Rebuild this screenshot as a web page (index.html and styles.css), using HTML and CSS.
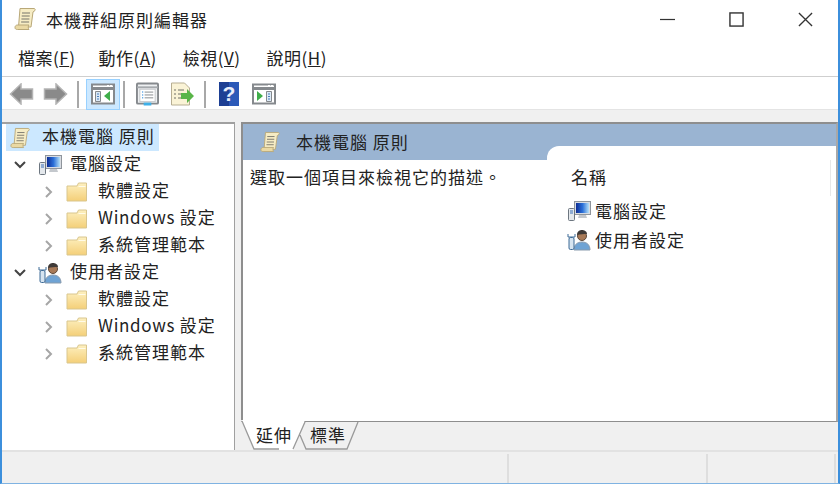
FILE: index.html
```html
<!DOCTYPE html>
<html lang="zh-Hant">

<head>
  <meta charset="UTF-8">
  <title>本機群組原則編輯器</title>
  <link rel="stylesheet" href="styles.css">
</head>

<body>
  <svg class="defs" width="0" height="0">
    <defs>
      <linearGradient id="folder-fill" x1="0" y1="0" x2="0" y2="1">
        <stop offset="0" stop-color="#fdf0c0"/>
        <stop offset="1" stop-color="#f4cf78"/>
      </linearGradient>
      <linearGradient id="screen-fill" x1="0" y1="0" x2="1" y2="0">
        <stop offset="0" stop-color="#0c2c94"/>
        <stop offset="0.5" stop-color="#2a6fd8"/>
        <stop offset="1" stop-color="#b5e0f8"/>
      </linearGradient>
      <symbol id="scroll" viewBox="0 0 22 24">
        <path d="M6 1.500h14c1 0 1.500 1 1 2l-2 1.500-2 15H4.500L6 1.500z" fill="#f6ecc4" stroke="#b9a878"/>
        <path d="M1 20.500c0-1.500 1-2.500 2.500-2.500H15c-1 1-1 3 0 4.500H3.500C2 22.500 1 22 1 20.500z" fill="#ead9a4" stroke="#b9a878"/>
        <path d="M8 6h8M7.700 9h8M7.400 12h8M7.100 15h8" stroke="#77756b" fill="none"/>
      </symbol>
      <symbol id="computer" viewBox="0 0 24 22">
        <rect x="7.500" y="1.500" width="16" height="13" fill="#d8dce2" stroke="#8f959c"/>
        <rect x="9" y="3" width="13" height="10" fill="url(#screen-fill)"/>
        <path d="M12 15h7l1 3h-9z" fill="#c4c8cd"/>
        <rect x="1.500" y="8.500" width="6" height="12" rx="1" fill="#e4e8ec" stroke="#6d7680"/>
        <path d="M3 11h3M3 13h3" stroke="#3a70b8"/>
      </symbol>
      <symbol id="user" viewBox="0 0 24 22">
        <path d="M7 21c0-5 3-8 8-8s8 3 8 8z" fill="#6fa3d4" stroke="#8a9bad"/>
        <circle cx="15" cy="7" r="4.500" fill="#a87a58" stroke="#5f4a3a"/>
        <path d="M10 6c0-4 3-5 5-5s5 1 5 4c-3 0-7 0-10 1z" fill="#3f3a38"/>
        <rect x="2" y="8.500" width="5" height="12" rx="1.500" fill="#d6e4f0" stroke="#3d6a96"/>
        <path d="M1 5v3h7V5" fill="none" stroke="#3d6a96"/>
      </symbol>
      <symbol id="folder" viewBox="0 0 22 20">
        <path d="M1 19V4h10l1.500-3h8v18z" fill="url(#folder-fill)" stroke="#d9c68e"/>
        <path d="M12.500 4.500h7" stroke="#fffbe8"/>
      </symbol>
      <symbol id="arrow" viewBox="0 0 25 22">
        <path d="M1.500 11 12 1v5h11.500v10H12v5z" fill="#8a8a8a" stroke="#b4b4b4" stroke-width="1.500"/>
      </symbol>
      <symbol id="pane" viewBox="0 0 24 22">
        <rect x="1" y="1.500" width="22" height="19" fill="#fff" stroke="#85898d" stroke-width="2"/>
        <path d="M1 5.500h22" stroke="#85898d" stroke-width="3"/>
        <rect x="16" y="2" width="2" height="2" fill="#fff"/>
        <rect x="19" y="2" width="2" height="2" fill="#fff"/>
      </symbol>
      <symbol id="rows" viewBox="0 0 6 11">
        <path d="M0.500 0.500h5v10h-5z" fill="#dbe9f6" stroke="#85898d"/>
        <path d="M2 3h2M2 5.500h2M2 8h2" stroke="#4a7fbc"/>
      </symbol>
    </defs>
  </svg>

  <div class="window">
    <header class="titlebar">
      <svg class="title-icon"><use href="#scroll"/></svg>
      <span class="title">本機群組原則編輯器</span>
      <div class="win-btns">
        <svg class="win-btn" viewBox="0 0 16 16"><path d="M0 8h16" stroke="#333" stroke-width="1.300"/></svg>
        <svg class="win-btn" viewBox="0 0 16 16"><rect x="1" y="1" width="14" height="14" fill="none" stroke="#333" stroke-width="1.500"/></svg>
        <svg class="win-btn" viewBox="0 0 16 16"><path d="M1 1l14 14M15 1 1 15" stroke="#333" stroke-width="1.400"/></svg>
      </div>
    </header>

    <nav class="menubar">
      <span>檔案(<u>F</u>)</span>
      <span>動作(<u>A</u>)</span>
      <span>檢視(<u>V</u>)</span>
      <span>說明(<u>H</u>)</span>
    </nav>

    <div class="toolbar">
      <svg class="tool-arrow"><use href="#arrow"/></svg>
      <svg class="tool-arrow flip"><use href="#arrow"/></svg>
      <i class="sep"></i>
      <div class="tool-active">
        <svg class="tool-icon" viewBox="0 0 24 22">
          <use href="#pane" width="24" height="22"/>
          <use href="#rows" x="4" y="8" width="6" height="11"/>
          <path d="M19 8v10l-6-5z" fill="#3fae4a"/>
        </svg>
      </div>
      <i class="sep sep-b"></i>
      <svg class="tool-icon tool-c" viewBox="0 0 24 24">
        <rect x="1" y="1" width="22" height="21" rx="1" fill="#eef0f2" stroke="#85898d" stroke-width="2"/>
        <path d="M1 5h22" stroke="#a5a9ad" stroke-width="2"/>
        <rect x="4" y="7" width="16" height="13" fill="#fff" stroke="#c3c6c9"/>
        <path d="M6.500 10h1M6.500 13h1M6.500 16h1" stroke="#3f95e0" stroke-width="1.500"/>
        <path d="M9 10h9M9 13h9M9 16h9" stroke="#85898d"/>
        <rect x="8" y="21" width="8" height="3" fill="#3fb0e8"/>
      </svg>
      <svg class="tool-icon tool-d" viewBox="0 0 24 24">
        <path d="M1.500 1h13l5 5v17h-18z" fill="#faf3d6" stroke="#b7ae92"/>
        <path d="M4 8h2M8 8h6M4 12h2M8 12h4M4 16h2M8 16h4" stroke="#6f6f66"/>
        <path d="M11 11h6V7l7 7-7 7v-4h-6z" fill="#59b548"/>
      </svg>
      <i class="sep sep-c"></i>
      <svg class="tool-help" viewBox="0 0 20 24">
        <rect width="20" height="24" fill="#1d3f94"/>
        <rect x="10" width="10" height="24" fill="#2b59b8"/>
        <text x="10" y="19" text-anchor="middle" class="help-mark">?</text>
      </svg>
      <svg class="tool-icon tool-e" viewBox="0 0 24 22">
        <use href="#pane" width="24" height="22"/>
        <use href="#rows" x="14" y="8" width="6" height="11"/>
        <path d="M5 8v10l6-5z" fill="#3fae4a"/>
      </svg>
    </div>

    <main class="panes">
      <ul class="tree">
        <li class="row root"><svg class="ico-root"><use href="#scroll"/></svg><span>本機電腦 原則</span></li>
        <li class="row"><svg class="chev" viewBox="0 0 12 8"><path d="M1 1l5 5 5-5" fill="none" stroke="#444" stroke-width="2"/></svg><svg class="ico-node"><use href="#computer"/></svg><span>電腦設定</span></li>
        <li class="row"><svg class="chev-r" viewBox="0 0 8 12"><path d="M1 1l5 5-5 5" fill="none" stroke="#a6a6a6" stroke-width="2"/></svg><svg class="ico-folder"><use href="#folder"/></svg><span>軟體設定</span></li>
        <li class="row"><svg class="chev-r" viewBox="0 0 8 12"><path d="M1 1l5 5-5 5" fill="none" stroke="#a6a6a6" stroke-width="2"/></svg><svg class="ico-folder"><use href="#folder"/></svg><span><b class="latin">Windows </b>設定</span></li>
        <li class="row"><svg class="chev-r" viewBox="0 0 8 12"><path d="M1 1l5 5-5 5" fill="none" stroke="#a6a6a6" stroke-width="2"/></svg><svg class="ico-folder"><use href="#folder"/></svg><span>系統管理範本</span></li>
        <li class="row"><svg class="chev" viewBox="0 0 12 8"><path d="M1 1l5 5 5-5" fill="none" stroke="#444" stroke-width="2"/></svg><svg class="ico-node"><use href="#user"/></svg><span>使用者設定</span></li>
        <li class="row"><svg class="chev-r" viewBox="0 0 8 12"><path d="M1 1l5 5-5 5" fill="none" stroke="#a6a6a6" stroke-width="2"/></svg><svg class="ico-folder"><use href="#folder"/></svg><span>軟體設定</span></li>
        <li class="row"><svg class="chev-r" viewBox="0 0 8 12"><path d="M1 1l5 5-5 5" fill="none" stroke="#a6a6a6" stroke-width="2"/></svg><svg class="ico-folder"><use href="#folder"/></svg><span><b class="latin">Windows </b>設定</span></li>
        <li class="row"><svg class="chev-r" viewBox="0 0 8 12"><path d="M1 1l5 5-5 5" fill="none" stroke="#a6a6a6" stroke-width="2"/></svg><svg class="ico-folder"><use href="#folder"/></svg><span>系統管理範本</span></li>
      </ul>

      <section class="detail">
        <div class="detail-box">
          <div class="detail-head">
            <svg class="ico-head"><use href="#scroll"/></svg>
            <span>本機電腦 原則</span>
            <i class="notch"></i>
          </div>
          <div class="detail-body">
            <p class="desc">選取一個項目來檢視它的描述。</p>
            <div class="list">
              <div class="list-head">名稱</div>
              <div class="list-row"><svg class="ico-list"><use href="#computer"/></svg><span>電腦設定</span></div>
              <div class="list-row"><svg class="ico-list"><use href="#user"/></svg><span>使用者設定</span></div>
            </div>
          </div>
        </div>
        <div class="tabs">
          <svg class="tab-lines" viewBox="0 0 597 31">
            <path d="M0 0 13 30H52L64 0z" fill="#fff"/>
            <path d="M1 1 13 29H38M64 2 52 29M59 15 65 29H106L117 2" fill="none" stroke="#9a9a9a" stroke-width="1.300"/>
          </svg>
          <span class="tab">延伸</span>
          <span class="tab">標準</span>
        </div>
      </section>
    </main>

    <footer class="statusbar">
      <i class="cell cell-a"></i>
      <i class="cell cell-b"></i>
      <i class="cell cell-c"></i>
    </footer>
  </div>
</body>

</html>
```

FILE: styles.css
```css
* {
  margin: 0;
  padding: 0;
  box-sizing: border-box;
}

body {
  font-family: "Noto Sans CJK TC", "Noto Sans", sans-serif;
  font-size: 17px;
  letter-spacing: 1px;
  color: #222;
  background: white;
}

.defs {
  position: absolute;
}

svg {
  display: block;
  flex: none;
}

.window {
  width: 840px;
  height: 484px;
  display: flex;
  flex-direction: column;
  background: #f0f0f0;
  border-left: 2px solid #3c8fdc;
  border-right: 2px solid #3c8fdc;
  border-bottom: 1px solid #7fb3e2;
  overflow: hidden;
}

.titlebar {
  height: 38px;
  display: flex;
  align-items: center;
  background: white;
  padding-left: 12px;
}

.title-icon {
  width: 22px;
  height: 24px;
}

.title {
  margin-left: 10px;
}

.win-btns {
  margin-left: auto;
  display: flex;
  gap: 54px;
  padding-right: 25px;
}

.win-btn {
  width: 15px;
  height: 15px;
}

.menubar {
  height: 39px;
  display: flex;
  gap: 26px;
  align-items: center;
  padding-left: 16px;
  background: white;
  border-bottom: 1px solid #cfcfcf;
  letter-spacing: 0.5px;
}

.menubar span:first-child {
  margin-right: -3px;
}

.toolbar {
  height: 33px;
  display: flex;
  align-items: center;
  background: white;
  padding-left: 7px;
  padding-top: 2px;
  border-bottom: 1px solid #e4e4e4;
}

.tool-arrow {
  width: 25px;
  height: 22px;
  margin-right: 9px;
}

.flip {
  transform: scaleX(-1);
}

.sep {
  width: 2px;
  height: 27px;
  background: #a8a8a8;
}

.tool-active {
  width: 34px;
  height: 31px;
  margin-left: 7px;
  background: #cce8ff;
  border: 1px solid #99d1ff;
  display: flex;
  align-items: center;
  justify-content: center;
}

.tool-icon {
  width: 24px;
  height: 22px;
}

.sep-b {
  margin-left: 3px;
}

.tool-c {
  margin-left: 11px;
  width: 23px;
  height: 24px;
}

.tool-d {
  margin-left: 11px;
  height: 24px;
}

.sep-c {
  margin-left: 10px;
}

.tool-help {
  width: 20px;
  height: 24px;
  margin-left: 13px;
}

.help-mark {
  font-family: "Liberation Sans", sans-serif;
  font-weight: bold;
  font-size: 21px;
  fill: #e8eefa;
  letter-spacing: 0;
}

.tool-e {
  margin-left: 13px;
}

.panes {
  flex: 1;
  display: flex;
  gap: 6px;
  padding-top: 12px;
  min-height: 0;
}

.tree {
  list-style: none;
  width: 233px;
  height: 329px;
  background: white;
  border: 1px solid #a0a0a0;
  border-left: none;
  border-top: 2px solid #a0a0a0;
  padding-left: 4px;
}

.row {
  height: 27px;
  display: flex;
  align-items: center;
}

.row > span {
  margin-bottom: 5px;
}

.latin {
  font-weight: normal;
  letter-spacing: 0.7px;
}

.root {
  width: 153px;
  background: #cce8ff;
}

.ico-root {
  width: 20px;
  height: 22px;
  margin-left: 4px;
  margin-right: 12px;
}

.chev {
  width: 12px;
  height: 8px;
  margin-left: 8px;
}

.ico-node {
  width: 24px;
  height: 22px;
  margin-left: 12px;
  margin-right: 8px;
}

.chev-r {
  width: 8px;
  height: 12px;
  margin-left: 39px;
}

.ico-folder {
  width: 22px;
  height: 20px;
  margin-left: 13px;
  margin-right: 10px;
}

.detail {
  width: 597px;
  display: flex;
  flex-direction: column;
}

.detail-box {
  height: 301px;
  display: flex;
  flex-direction: column;
  background: white;
  border: 2px solid #8e8e8e;
  border-bottom-width: 1px;
  border-right: 2px solid #a8a8a8;
}

.detail-head {
  position: relative;
  height: 36px;
  flex: none;
  background: #9ab4d2;
  display: flex;
  align-items: center;
  padding-left: 17px;
}

.detail-head span {
  margin-bottom: 1px;
}

.ico-head {
  width: 20px;
  height: 22px;
  margin-right: 16px;
}

.notch {
  position: absolute;
  left: 304px;
  right: 0;
  top: 22px;
  bottom: 0;
  background: white;
  border-top-left-radius: 12px;
}

.detail-body {
  flex: 1;
  display: flex;
}

.desc {
  width: 320px;
  padding: 4px 0 0 7px;
}

.list {
  width: 268px;
}

.list-head {
  height: 36px;
  padding-top: 4px;
  padding-left: 8px;
  border-right: 1px solid #e8e8e8;
}

.list-row {
  height: 29px;
  display: flex;
  align-items: center;
  padding-left: 4px;
}

.ico-list {
  width: 24px;
  height: 22px;
  margin-right: 4px;
}

.tabs {
  position: relative;
  height: 28px;
  display: flex;
  padding-left: 15px;
}

.tab-lines {
  position: absolute;
  left: 0;
  top: -2px;
  width: 597px;
  height: 31px;
}

.tab {
  position: relative;
  line-height: 26px;
  width: 54px;
}

.statusbar {
  height: 33px;
  display: flex;
  border-top: 2px solid #e2e2e2;
}

.cell {
  border-right: 2px solid #dedede;
  margin-top: 2px;
}

.cell-a {
  width: 507px;
}

.cell-b {
  width: 199px;
}

.cell-c {
  width: 128px;
}
```
